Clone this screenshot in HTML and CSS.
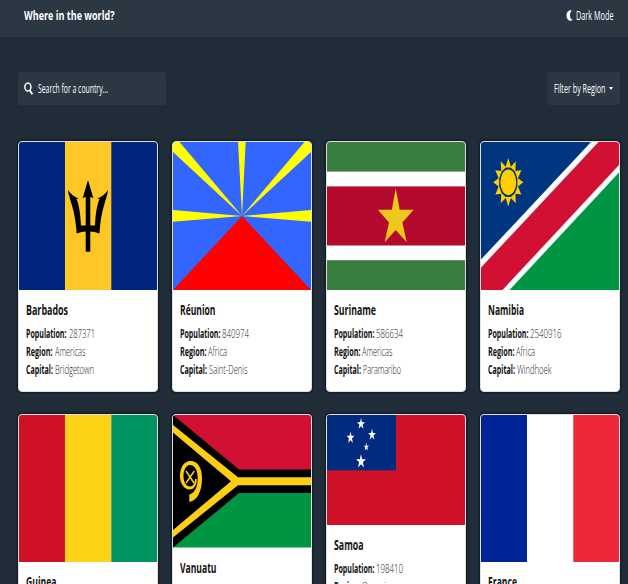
FILE: index.html
```html
<!DOCTYPE html>
<html lang="en">
<head>
<meta charset="utf-8">
<title>Where in the world?</title>
<link rel="stylesheet" href="styles.css">
</head>
<body>
<svg class="defs" aria-hidden="true">
  <defs>
    <polygon id="star" points="0,-1 .225,-.309 .951,-.309 .363,.118 .588,.809 0,.382 -.588,.809 -.363,.118 -.951,-.309 -.225,-.309"/>
    <polygon id="ray" points="0,-1 .19,-.61 -.19,-.61"/>
  </defs>
</svg>
<header class="topbar">
  <h1 class="brand"><span data-w="90.5">Where in the world?</span></h1>
  <button class="mode">
    <svg class="moon" viewBox="0 0 7 11"><path d="M5 .2C2.400 0 .5 2.400 .5 5.500S2.500 11 5 10.800C5.900 10.700 6.500 10.200 6.700 9.600C4.800 9.300 4 7.700 4 5.500S4.600 1.700 5.800 .6Z" fill="#fff"/></svg>
    <span data-w="37.5">Dark Mode</span>
  </button>
</header>
<main>
  <div class="controls">
    <label class="search">
      <svg class="glass" viewBox="0 0 9 13"><ellipse cx="3.900" cy="5" rx="3" ry="4.100" fill="none" stroke="#fff" stroke-width="1.500"/><path d="M5.800 8.500L8.400 12.200" stroke="#fff" stroke-width="1.700"/></svg>
      <span data-w="70">Search for a country...</span>
    </label>
    <button class="filter"><span data-w="51.5">Filter by Region</span><i class="caret"></i></button>
  </div>
  <section class="grid">
    <article class="card">
      <svg class="flag" viewBox="0 0 138 148" preserveAspectRatio="none">
        <rect width="138" height="148" fill="#00267f"/><rect x="46" width="46.300" height="148" fill="#ffc726"/>
        <path d="M69 38L74.500 56.500Q72.500 54.500 71.300 55V83.500H76C76.500 74 77.500 64 80.500 57L78.500 56.500Q85 54 89 48C88.500 53 87 56 85.500 62C82.500 71 81 82 80.500 91.500Q75 89.500 71.300 89.500V109.700H66.700V89.500Q63 89.500 57.700 91.500C57 82 55.500 71 52.500 62C51 56 49.500 53 49 48Q53 54 59.500 56.500L57.500 57C60.500 64 61.500 74 62 83.500H66.700V55Q65.500 54.500 63.500 56.500Z"/>
      </svg>
      <div class="info">
        <h2><span data-w="42">Barbados</span></h2>
        <p><b data-w="40.5">Population:</b><span data-w="26">287371</span></p>
        <p><b data-w="26.5">Region:</b><span data-w="30.5">Americas</span></p>
        <p><b data-w="27">Capital:</b><span data-w="39">Bridgetown</span></p>
      </div>
    </article>
    <article class="card">
      <svg class="flag" viewBox="0 0 138 148" preserveAspectRatio="none">
        <rect width="138" height="148" fill="#36f"/>
        <path d="M69 74L65 0H72.700ZM69 74L0 68V79.700ZM69 74L138 68V79.700ZM69 74L0 10V0H6.500ZM69 74L131.500 0H138V10Z" fill="#ff0"/>
        <path d="M69 74L138 148H0Z" fill="#f00"/>
      </svg>
      <div class="info">
        <h2><span data-w="35.5">Réunion</span></h2>
        <p><b data-w="40.5">Population:</b><span data-w="27">840974</span></p>
        <p><b data-w="26.5">Region:</b><span data-w="19">Africa</span></p>
        <p><b data-w="27">Capital:</b><span data-w="38.5">Saint-Denis</span></p>
      </div>
    </article>
    <article class="card">
      <svg class="flag" viewBox="0 0 138 148" preserveAspectRatio="none">
        <rect width="138" height="148" fill="#377e3f"/><rect y="29.600" width="138" height="88.600" fill="#fff"/><rect y="44.400" width="138" height="59.100" fill="#b40a2d"/>
        <path d="M68.700 46.300L72.700 67.700H86.700L75.400 80.600L79.700 100.300L68.700 88L57.700 100.300L62 80.600L50.900 67.700H64.900Z" fill="#ecc81d"/>
      </svg>
      <div class="info">
        <h2><span data-w="42">Suriname</span></h2>
        <p><b data-w="40.5">Population:</b><span data-w="27">586634</span></p>
        <p><b data-w="26.5">Region:</b><span data-w="30.5">Americas</span></p>
        <p><b data-w="27">Capital:</b><span data-w="38">Paramaribo</span></p>
      </div>
    </article>
    <article class="card">
      <svg class="flag" viewBox="0 0 138 148" preserveAspectRatio="none">
        <rect width="138" height="148" fill="#fff"/>
        <path d="M0 0H110L0 117.500Z" fill="#003580"/><path d="M117.500 0H138V23L21.500 148H0V125.500Z" fill="#d21034"/><path d="M138 30.500V148H28.500Z" fill="#009543"/>
        <g transform="translate(27.300 40.300) scale(15 24.200)" fill="#ffce00">
          <use href="#ray"/><use href="#ray" transform="rotate(30)"/><use href="#ray" transform="rotate(60)"/><use href="#ray" transform="rotate(90)"/><use href="#ray" transform="rotate(120)"/><use href="#ray" transform="rotate(150)"/><use href="#ray" transform="rotate(180)"/><use href="#ray" transform="rotate(210)"/><use href="#ray" transform="rotate(240)"/><use href="#ray" transform="rotate(270)"/><use href="#ray" transform="rotate(300)"/><use href="#ray" transform="rotate(330)"/>
          <circle r=".53"/>
        </g>
      </svg>
      <div class="info">
        <h2><span data-w="36">Namibia</span></h2>
        <p><b data-w="40.5">Population:</b><span data-w="31.5">2540916</span></p>
        <p><b data-w="26.5">Region:</b><span data-w="19">Africa</span></p>
        <p><b data-w="27">Capital:</b><span data-w="34.5">Windhoek</span></p>
      </div>
    </article>
    <article class="card">
      <svg class="flag h147" viewBox="0 0 138 147" preserveAspectRatio="none">
        <rect width="46" height="147" fill="#ce1126"/><rect x="46" width="46.300" height="147" fill="#fcd116"/><rect x="92.300" width="45.700" height="147" fill="#009460"/>
      </svg>
      <div class="info">
        <h2><span data-w="30.5">Guinea</span></h2>
      </div>
    </article>
    <article class="card">
      <svg class="flag h132" viewBox="0 0 138 132.500" preserveAspectRatio="none">
        <rect width="138" height="66" fill="#d21034"/><rect y="66" width="138" height="66.500" fill="#009543"/>
        <path d="M0 0L66 54.500H138V78H66L0 132.500Z"/>
        <path d="M0 10L65 62.300H138V70.300H65L0 122.500V115L58 66.300L0 17.500Z" fill="#fdce12"/>
        <path d="M16.300 79.500C21.500 78.500 24.700 72 24.700 63C24.700 55 21.500 50 17 50C13 50 10.500 55 10.500 61C10.500 67 13 71.500 17 71.500C20 71.500 22 68 22 64H23.800C23.800 70 21 74.500 17 74.500C11 74.500 7 68.500 7 61C7 52.500 11 46 17.500 46C25 46 29 53.500 29 63C29 76 24.500 85 17.300 86.700H16.300Z" fill="#fdce12"/>
        <path d="M13 56L21 68M21.300 56L13 68" stroke="#fdce12" stroke-width="1.500"/>
      </svg>
      <div class="info">
        <h2><span data-w="36.5">Vanuatu</span></h2>
      </div>
    </article>
    <article class="card">
      <svg class="flag h110" viewBox="0 0 138 110" preserveAspectRatio="none">
        <rect width="138" height="110" fill="#ce1126"/><rect width="69" height="55.300" fill="#002b7f"/>
        <g fill="#fff">
          <use href="#star" transform="translate(34 9) scale(4.300 6)"/><use href="#star" transform="translate(23.500 22.800) scale(4.100 6.300)"/><use href="#star" transform="translate(45 19.800) scale(4.100 6)"/><use href="#star" transform="translate(39.300 32) scale(2.800 4.400)"/><use href="#star" transform="translate(34 46.500) scale(5.200 7.400)"/>
        </g>
      </svg>
      <div class="info">
        <h2><span data-w="29.5">Samoa</span></h2>
        <p><b data-w="40.5">Population:</b><span data-w="27">198410</span></p>
        <p><b data-w="26.5">Region:</b><span data-w="28">Oceania</span></p>
      </div>
    </article>
    <article class="card">
      <svg class="flag h147" viewBox="0 0 138 147" preserveAspectRatio="none">
        <rect width="138" height="147" fill="#fff"/><rect width="46" height="147" fill="#002395"/><rect x="92.300" width="45.700" height="147" fill="#ed2939"/>
      </svg>
      <div class="info">
        <h2><span data-w="29">France</span></h2>
      </div>
    </article>
  </section>
</main>
<script src="fit.js"></script>
</body>
</html>
```
FILE: fit.js
```js
// Condense each label to its measure while keeping it in the flow.
document.querySelectorAll('[data-w]').forEach(function (el) {
  var natural = el.getBoundingClientRect().width;
  var wanted = parseFloat(el.dataset.w);
  el.style.transform = 'scaleX(' + wanted / natural + ')';
  el.style.marginRight = (wanted - natural) + 'px';
});
```
FILE: styles.css
```css
* { box-sizing: border-box; }
html, body { height: 584px; overflow: hidden; }
body {
  margin: 0;
  background: #202c37;
  color: #fff;
  font-family: "Open Sans", "Noto Sans", sans-serif;
  font-size: 12px;
}
.defs { display: none; }
[data-w] {
  display: inline-block;
  flex: none;
  white-space: nowrap;
  transform-origin: left center;
}
button { border: 0; padding: 0; background: none; color: inherit; font: inherit; }
.topbar {
  display: flex;
  justify-content: space-between;
  align-items: center;
  height: 37px;
  padding: 0 14.5px 6px 23.5px;
  background: #2b3844;
}
.brand { margin: 0; font-size: 12.5px; font-weight: 700; line-height: 18px; }
.mode { display: flex; align-items: center; gap: 3px; font-weight: 500; }
.moon { width: 7px; height: 11px; }
.controls {
  display: flex;
  justify-content: space-between;
  padding: 35px 8px 0 18px;
}
.search, .filter {
  display: flex;
  align-items: center;
  height: 33px;
  border-radius: 3px;
  background: #2b3844;
}
.search { width: 148px; padding-left: 6px; gap: 5px; }
.glass { width: 9px; height: 13px; }
.filter { width: 73px; padding: 0 0 1px 6.5px; gap: 4px; }
.caret {
  border: 2.5px solid transparent;
  border-top: 3.5px solid #fff;
  border-bottom: 0;
}
.grid {
  display: grid;
  grid-template-columns: repeat(4, 140px);
  grid-auto-rows: 251px;
  gap: 22px 13.9px;
  padding: 36px 0 0 18px;
}
.card {
  overflow: hidden;
  border: 1px solid #dfdfdf;
  border-radius: 4px;
  background: #fff;
  box-shadow: 0 0 2px 1px #101923;
}
.flag { display: block; width: 138px; height: 148px; }
.h147 { height: 147px; }
.h132 { height: 132.5px; }
.h110 { height: 110px; }
.info { padding: 11px 0 0 7px; color: #111; }
.info h2 { margin: 0 0 5px; font-size: 13.5px; font-weight: 700; line-height: 19px; }
.info p { display: flex; gap: 2px; margin: 0; line-height: 18px; }
.info p b { font-weight: 700; }
.info p span { font-weight: 300; color: #222; }
```
